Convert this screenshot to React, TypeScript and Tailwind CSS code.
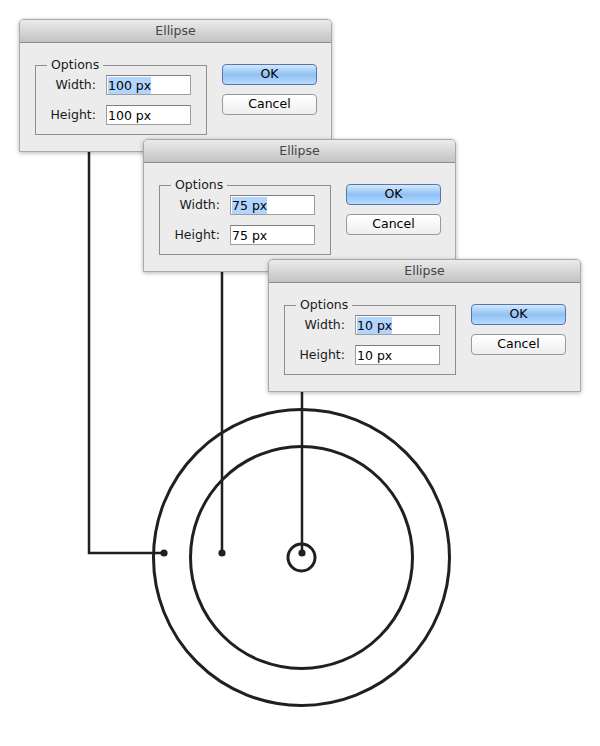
const dialogs = [
  { left: "left-[19px] top-[19px]", width: "100 px", height: "100 px" },
  { left: "left-[143px] top-[139px]", width: "75 px", height: "75 px" },
  { left: "left-[268px] top-[259px]", width: "10 px", height: "10 px" },
];

const EllipseDialog = ({ pos, width, height }: { pos: string; width: string; height: string }) => {
  return (
    <div
      className={`absolute ${pos} w-[313px] h-[133px] bg-[#ececec] border border-[#a9a9a9] rounded-t-[5px] shadow-[0_1px_4px_rgba(0,0,0,0.3)] overflow-hidden`}
    >
      {/* title bar */}
      <div className="h-[23px] flex items-center justify-center bg-gradient-to-b from-[#ebebeb] to-[#c3c3c3] border-b border-[#8c8c8c] text-[#454545]">
        Ellipse
      </div>

      <div className="flex pl-[15px] pt-[22px]">
        {/* Options group */}
        <div className="relative w-[172px] h-[70px] border border-[#8e8e8e]">
          <span className="absolute -top-[9px] left-[11px] px-[4px] bg-[#ececec] leading-[16px] text-[#1a1a1a]">
            Options
          </span>
          <div className="grid grid-cols-[60px_85px] gap-x-[10px] gap-y-[10px] pt-[9px]">
            <div className="h-[20px] flex items-center justify-end text-[#1a1a1a]">Width:</div>
            <div className="h-[20px] bg-white border border-[#9d9d9d] border-t-[#7c7c7c] flex items-center pl-[1px]">
              <span className="bg-[#b3d4fc] leading-[17px] text-black">{width}</span>
            </div>
            <div className="h-[20px] flex items-center justify-end text-[#1a1a1a]">Height:</div>
            <div className="h-[20px] bg-white border border-[#9d9d9d] border-t-[#7c7c7c] flex items-center pl-[1px]">
              <span className="leading-[17px] text-black">{height}</span>
            </div>
          </div>
        </div>

        {/* buttons */}
        <div className="flex flex-col gap-[9px] ml-[15px] -mt-[1px]">
          <div className="w-[95px] h-[21px] rounded-[4px] border border-[#5676b1] bg-gradient-to-b from-[#d6e8fb] via-[#8fc1f4] to-[#b9dcfd] flex items-center justify-center text-black">
            OK
          </div>
          <div className="w-[95px] h-[21px] rounded-[4px] border border-[#989898] bg-gradient-to-b from-white to-[#efefef] flex items-center justify-center text-black">
            Cancel
          </div>
        </div>
      </div>
    </div>
  );
};

export default function App() {
  return (
    <div className="relative w-[600px] h-[746px] bg-white overflow-hidden font-['DejaVu_Sans',sans-serif] text-[12.5px]">
      {/* diagram: leader lines and circles */}
      <svg className="absolute left-0 top-0" width="600" height="746" viewBox="0 0 600 746">
        <g stroke="#231f20" fill="none">
          <circle cx="301.5" cy="557.5" r="148" strokeWidth="3" />
          <circle cx="301.5" cy="557.5" r="111" strokeWidth="3" />
          <circle cx="301.5" cy="557.5" r="13.5" strokeWidth="3" />
          <polyline points="89,150 89,553 164,553" strokeWidth="2.5" />
          <line x1="222" y1="270" x2="222" y2="553" strokeWidth="2.5" />
          <line x1="302" y1="390" x2="302" y2="553" strokeWidth="2.5" />
        </g>
        <g fill="#231f20">
          <circle cx="164" cy="553" r="3.6" />
          <circle cx="222" cy="553" r="3.6" />
          <circle cx="302" cy="553" r="3.6" />
        </g>
      </svg>

      {dialogs.map((d, i) => (
        <EllipseDialog key={i} pos={d.left} width={d.width} height={d.height} />
      ))}
    </div>
  );
}
